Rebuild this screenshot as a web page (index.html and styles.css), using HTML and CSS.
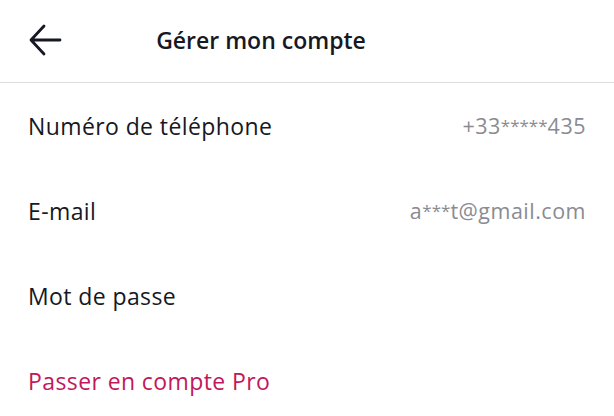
FILE: index.html
```html
<!DOCTYPE html>
<html lang="fr">
<head>
<meta charset="utf-8">
<link rel="stylesheet" href="styles.css">
</head>
<body>
<header class="topbar">
  <button class="back" aria-label="Retour">
    <svg width="34" height="34" viewBox="0 0 34 34" fill="none" stroke="#161823" stroke-width="2.8" stroke-linecap="round" stroke-linejoin="round"><path d="M32 17H3M16 3L3 17l13 14"/></svg>
  </button>
  <h1 class="title">Gérer mon compte</h1>
</header>
<ul class="list">
  <li class="row"><span class="label">Numéro de téléphone</span><span class="value">+33<span class="mask">*****</span>435</span></li>
  <li class="row"><span class="label">E-mail</span><span class="value">a<span class="mask">***</span>t@gmail.com</span></li>
  <li class="row"><span class="label">Mot de passe</span></li>
  <li class="row"><span class="label pro">Passer en compte Pro</span></li>
</ul>
</body>
</html>
```
FILE: styles.css
```css
html, body {
  margin: 0;
  padding: 0;
  background: #ffffff;
  font-family: "Open Sans", "Liberation Sans", sans-serif;
  color: #161823;
}
.topbar {
  height: 82px;
  border-bottom: 1.5px solid #dcdcdc;
  display: flex;
  align-items: center;
  justify-content: center;
  padding-right: 92px;
  position: relative;
}
.back {
  position: absolute;
  left: 28px;
  top: 23px;
  padding: 0;
  border: 0;
  background: none;
  width: 34px;
  height: 34px;
}
.title {
  margin: -2px 0 0;
  font-size: 23px;
  font-weight: 600;
  color: #161823;
}
.list {
  list-style: none;
  margin: 0;
  padding: 0;
}
.row {
  height: 85px;
  display: flex;
  align-items: center;
  justify-content: space-between;
  padding: 0 28px;
}
.label {
  font-size: 23px;
  letter-spacing: 0.4px;
  color: #161823;
}
.value {
  font-size: 21.5px;
  letter-spacing: 0.5px;
  color: #8a8b91;
}
.mask {
  font-size: 17px;
  letter-spacing: 0;
  vertical-align: 2px;
}
.pro {
  color: #c2185b;
}
```
